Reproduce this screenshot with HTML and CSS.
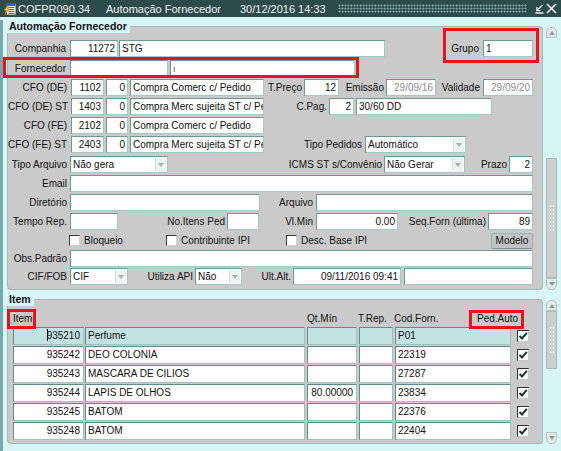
FILE: index.html
```html
<!DOCTYPE html>
<html lang="pt-BR">
<head>
    <meta charset="UTF-8">
    <title>Automação Fornecedor</title>
    <link rel="stylesheet" href="styles.css">
</head>
<body>
<div class="window">
    <div class="titlebar">
        <svg class="app-icon" width="14" height="14" viewBox="0 0 14 14">
            <rect x="3.5" y="1.5" width="9.5" height="11.5" fill="#f2f2f2" stroke="#4a4a4a" stroke-width="0.8"/>
            <rect x="4" y="2" width="8.5" height="2" fill="#2b5fd0"/>
            <path d="M5.5 5.5h6M5.5 7.5h6M5.5 9.5h6M5.5 11.5h6" stroke="#d33" stroke-width="1"/>
            <path d="M4.5 3.5 L1 8.5 H3 L1.5 13.5 L6 7 H4 L5.8 3.5Z" fill="#f5d321" stroke="#7a5c00" stroke-width="0.4"/>
        </svg>
        <span class="t-form">COFPR090.34</span>
        <span class="t-name">Automação Fornecedor</span>
        <span class="t-date">30/12/2016 14:33</span>
        <span class="grip"></span>
        <svg class="t-min" width="9" height="10" viewBox="0 0 9 10">
            <path d="M7.5 1 L2 6.5 M1.8 3 V6.7 H5.5 M0.5 9 H8.5" stroke="#e6eeee" stroke-width="1.3" fill="none"/>
        </svg>
        <svg class="t-close" width="11" height="11" viewBox="0 0 11 11">
            <path d="M1 1 L10 10 M10 1 L1 10" stroke="#f2f6f6" stroke-width="1.6"/>
        </svg>
    </div>

    <div class="body">
        <div class="block">
            <fieldset class="frame">
                <legend>Automação Fornecedor</legend>
                <div class="form">
                    <div class="row gap3">
                        <span class="lb w-58">Companhia</span>
                        <div class="fd w-48 ml-4 r">11272</div>
                        <div class="fd w-266 ml-1">STG</div>
                        <span class="lb w-30 ml-64">Grupo</span>
                        <div class="fd w-50 ml-4">1</div>
                    </div>
                    <div class="row">
                        <span class="lb w-58">Fornecedor</span>
                        <div class="fd w-98 ml-4"></div>
                        <div class="fd w-185 ml-2"><span class="tick">ı</span></div>
                    </div>
                    <div class="row">
                        <span class="lb w-59">CFO (DE)</span>
                        <div class="fd w-33 ml-4 r">1102</div>
                        <div class="fd w-22 ml-2 r">0</div>
                        <div class="fd w-134 ml-2">Compra Comerc c/ Pedido</div>
                        <span class="lb w-36 ml-2">T.Preço</span>
                        <div class="fd w-35 ml-2 r">12</div>
                        <span class="lb w-43 ml-2">Emissão</span>
                        <div class="fd w-50 ml-2 r dis">29/09/16</div>
                        <span class="lb w-42 ml-2">Validade</span>
                        <div class="fd w-50 ml-3 r dis">29/09/20</div>
                    </div>
                    <div class="row">
                        <span class="lb w-59">CFO (DE) ST</span>
                        <div class="fd w-33 ml-4 r">1403</div>
                        <div class="fd w-22 ml-2 r">0</div>
                        <div class="fd w-134 ml-2">Compra Merc sujeita ST c/ Pe</div>
                        <span class="lb w-61 ml-2">C.Pag.</span>
                        <div class="fd w-25 ml-2 r">2</div>
                        <div class="fd w-136 ml-2">30/60 DD</div>
                    </div>
                    <div class="row">
                        <span class="lb w-59">CFO (FE)</span>
                        <div class="fd w-33 ml-4 r">2102</div>
                        <div class="fd w-22 ml-2 r">0</div>
                        <div class="fd w-134 ml-2">Compra Comerc c/ Pedido</div>
                    </div>
                    <div class="row gap3">
                        <span class="lb w-59">CFO (FE) ST</span>
                        <div class="fd w-33 ml-4 r">2403</div>
                        <div class="fd w-22 ml-2 r">0</div>
                        <div class="fd w-134 ml-2">Compra Merc sujeita ST c/ Pe</div>
                        <span class="lb w-96 ml-2">Tipo Pedidos</span>
                        <div class="fd sel w-101 ml-3">Automático<span class="arr"></span></div>
                    </div>
                    <div class="row">
                        <span class="lb w-59">Tipo Arquivo</span>
                        <div class="fd sel w-98 ml-3">Não gera<span class="arr"></span></div>
                        <span class="lb w-212 ml-2">ICMS ST s/Convênio</span>
                        <div class="fd sel w-81 ml-2">Não Gerar<span class="arr"></span></div>
                        <span class="lb w-40 ml-2">Prazo</span>
                        <div class="fd w-24 ml-2 r">2</div>
                    </div>
                    <div class="row">
                        <span class="lb w-59">Email</span>
                        <div class="fd w-463 ml-3"></div>
                    </div>
                    <div class="row">
                        <span class="lb w-59">Diretório</span>
                        <div class="fd w-190 ml-3"></div>
                        <span class="lb w-51 ml-2">Arquivo</span>
                        <div class="fd w-217 ml-3"></div>
                    </div>
                    <div class="row">
                        <span class="lb w-59">Tempo Rep.</span>
                        <div class="fd w-48 ml-3"></div>
                        <span class="lb w-105 ml-2">No.Itens Ped</span>
                        <div class="fd w-32 ml-2"></div>
                        <span class="lb w-52 ml-2">Vl.Min</span>
                        <div class="fd w-82 ml-3 r">0.00</div>
                        <span class="lb w-86 ml-2">Seq.Forn (última)</span>
                        <div class="fd w-45 ml-2 r">89</div>
                    </div>
                    <div class="row gap1">
                        <label class="check w-97 ml-61"><span class="cb"></span>Bloqueio</label>
                        <label class="check w-120"><span class="cb"></span>Contribuinte IPI</label>
                        <label class="check w-205"><span class="cb"></span>Desc. Base IPI</label>
                        <button class="btn w-42">Modelo</button>
                    </div>
                    <div class="row gap1">
                        <span class="lb w-59">Obs.Padrão</span>
                        <div class="fd w-463 ml-3"></div>
                    </div>
                    <div class="row">
                        <span class="lb w-59">CIF/FOB</span>
                        <div class="fd sel w-58 ml-3">CIF<span class="arr"></span></div>
                        <span class="lb w-63 ml-2">Utiliza API</span>
                        <div class="fd sel w-47 ml-2">Não<span class="arr"></span></div>
                        <span class="lb w-47 ml-2">Ult.Alt.</span>
                        <div class="fd w-108 ml-2 r">09/11/2016 09:41</div>
                        <div class="fd w-129 ml-3"></div>
                    </div>
                </div>
            </fieldset>
            <div class="vscroll">
                <span class="sb-up"></span>
                <span class="sb-track"></span>
                <span class="sb-thumb thumb-top"><i></i></span>
                <span class="sb-down"></span>
            </div>
        </div>

        <div class="block items">
            <fieldset class="frame">
                <legend>Item</legend>
                <div class="grid">
                    <div class="ihead">
                        <span class="h-item">Item</span>
                        <span class="h-qt">Qt.Mín</span>
                        <span class="h-trep">T.Rep.</span>
                        <span class="h-cod">Cod.Forn.</span>
                        <span class="h-ped">Ped.Auto</span>
                    </div>
                    <div class="irow cur">
                        <div class="ifd w-71 ml-5 r"><span class="caret"></span>935210</div>
                        <div class="ifd w-220 ml-1">Perfume</div>
                        <div class="ifd w-50 ml-2 r"></div>
                        <div class="ifd w-34 ml-2"></div>
                        <div class="ifd w-116 ml-2">P01</div>
                        <span class="cbx"><svg width="10" height="10" viewBox="0 0 10 10"><path d="M1.5 5 L4 7.5 L8.8 1.8" stroke="#1b3535" stroke-width="2" fill="none"/></svg></span>
                    </div>
                    <div class="irow">
                        <div class="ifd w-71 ml-5 r">935242</div>
                        <div class="ifd w-220 ml-1">DEO COLONIA</div>
                        <div class="ifd w-50 ml-2 r"></div>
                        <div class="ifd w-34 ml-2"></div>
                        <div class="ifd w-116 ml-2">22319</div>
                        <span class="cbx"><svg width="10" height="10" viewBox="0 0 10 10"><path d="M1.5 5 L4 7.5 L8.8 1.8" stroke="#1b3535" stroke-width="2" fill="none"/></svg></span>
                    </div>
                    <div class="irow">
                        <div class="ifd w-71 ml-5 r">935243</div>
                        <div class="ifd w-220 ml-1">MASCARA DE CILIOS</div>
                        <div class="ifd w-50 ml-2 r"></div>
                        <div class="ifd w-34 ml-2"></div>
                        <div class="ifd w-116 ml-2">27287</div>
                        <span class="cbx"><svg width="10" height="10" viewBox="0 0 10 10"><path d="M1.5 5 L4 7.5 L8.8 1.8" stroke="#1b3535" stroke-width="2" fill="none"/></svg></span>
                    </div>
                    <div class="irow">
                        <div class="ifd w-71 ml-5 r">935244</div>
                        <div class="ifd w-220 ml-1">LAPIS DE OLHOS</div>
                        <div class="ifd w-50 ml-2 r">80.00000</div>
                        <div class="ifd w-34 ml-2"></div>
                        <div class="ifd w-116 ml-2">23834</div>
                        <span class="cbx"><svg width="10" height="10" viewBox="0 0 10 10"><path d="M1.5 5 L4 7.5 L8.8 1.8" stroke="#1b3535" stroke-width="2" fill="none"/></svg></span>
                    </div>
                    <div class="irow">
                        <div class="ifd w-71 ml-5 r">935245</div>
                        <div class="ifd w-220 ml-1">BATOM</div>
                        <div class="ifd w-50 ml-2 r"></div>
                        <div class="ifd w-34 ml-2"></div>
                        <div class="ifd w-116 ml-2">22376</div>
                        <span class="cbx"><svg width="10" height="10" viewBox="0 0 10 10"><path d="M1.5 5 L4 7.5 L8.8 1.8" stroke="#1b3535" stroke-width="2" fill="none"/></svg></span>
                    </div>
                    <div class="irow">
                        <div class="ifd w-71 ml-5 r">935248</div>
                        <div class="ifd w-220 ml-1">BATOM</div>
                        <div class="ifd w-50 ml-2 r"></div>
                        <div class="ifd w-34 ml-2"></div>
                        <div class="ifd w-116 ml-2">22404</div>
                        <span class="cbx"><svg width="10" height="10" viewBox="0 0 10 10"><path d="M1.5 5 L4 7.5 L8.8 1.8" stroke="#1b3535" stroke-width="2" fill="none"/></svg></span>
                    </div>
                </div>
            </fieldset>
            <div class="vscroll">
                <span class="sb-up"></span>
                <span class="sb-thumb thumb-items"><i></i></span>
                <span class="sb-track"></span>
                <span class="sb-down"></span>
            </div>
        </div>
    </div>

    <!-- marcacoes em vermelho -->
    <div class="mark mark-forn"></div>
    <div class="mark mark-grupo"></div>
    <div class="mark mark-item"></div>
    <div class="mark mark-ped"></div>
</div>
</body>
</html>
```

FILE: styles.css
```css
*{
    box-sizing: border-box;
}

body{
    margin: 0;
    background: #d9f6f6;
    font-family: "Liberation Sans", Arial, sans-serif;
    font-size: 10px;
    color: #111;
}

.window{
    position: relative;
    width: 561px;
    height: 451px;
    overflow: hidden;
}

/* barra de titulo */
.titlebar{
    display: flex;
    align-items: center;
    height: 17px;
    background: #2e4b4c;
    color: #eef4f4;
    font-size: 11px;
    white-space: nowrap;
}

.app-icon{
    flex: none;
    margin-left: 3px;
}

.t-form{
    width: 88px;
    margin-left: 1px;
}

.t-name{
    width: 134px;
}

.t-date{
    width: 98px;
}

.grip{
    width: 189px;
    height: 9px;
    background-image: radial-gradient(circle, #86acac 0.9px, transparent 1.1px);
    background-size: 3px 3px;
}

.t-min{
    flex: none;
    margin-left: 8px;
}

.t-close{
    flex: none;
    margin-left: 2px;
}

/* corpo */
.body{
    border-left: 3px solid #79a9ad;
    padding-left: 4px;
    height: 434px;
}

.block{
    display: flex;
    margin-top: 3px;
}

.frame{
    margin: 0;
    padding: 0 0 2px;
    width: 536px;
    min-width: 0;
    border: 1px solid #a7b6b6;
    border-radius: 4px;
    background: #cacaca;
}

.frame legend{
    margin-left: -1px;
    padding: 0 3px 0 2px;
    background: #d9f6f6;
    font-size: 10.5px;
    font-weight: bold;
    line-height: 13px;
}

.form{
    padding-top: 7px;
}

.row{
    display: flex;
    align-items: center;
    height: 17px;
    margin-bottom: 2px;
}

.row.gap3{
    margin-bottom: 3px;
}

.row.gap1{
    margin-bottom: 1px;
}

.lb{
    flex: none;
    text-align: right;
    white-space: nowrap;
}

.fd{
    flex: none;
    height: 17px;
    padding: 0 2px;
    background: #fff;
    border: 1px solid #a9c6c6;
    border-top-color: #6e9898;
    border-left-color: #6e9898;
    line-height: 15px;
    white-space: nowrap;
    overflow: hidden;
}

.r{
    text-align: right;
}

.dis{
    color: #8e8e8e;
}

.tick{
    color: #555;
    font-size: 9px;
}

.sel{
    display: flex;
    align-items: center;
    padding-right: 1px;
}

.arr{
    margin-left: auto;
    width: 11px;
    height: 13px;
    background: #eef2f2;
    border-left: 1px solid #d6dede;
    display: flex;
    align-items: center;
    justify-content: center;
}

.arr::after{
    content: "";
    border-left: 3.5px solid transparent;
    border-right: 3.5px solid transparent;
    border-top: 4px solid #a3aeae;
}

.check{
    flex: none;
    display: flex;
    align-items: center;
    white-space: nowrap;
}

.cb{
    width: 11px;
    height: 11px;
    margin-right: 4px;
    background: #fff;
    border: 1px solid #cfcfcf;
    border-top-color: #3c3c3c;
    border-left-color: #3c3c3c;
}

.btn{
    flex: none;
    height: 16px;
    padding: 0;
    font: inherit;
    color: #111;
    background: #c2c4c4;
    border: 1px solid #9fb2b2;
    border-bottom-color: #7f9090;
    border-radius: 2px;
}

/* scroll vertical */
.vscroll{
    flex: none;
    width: 11px;
    margin: 7px 0 0 3px;
    display: flex;
    flex-direction: column;
}

.sb-up,
.sb-down{
    display: flex;
    align-items: center;
    justify-content: center;
    height: 11px;
    background: #e3eaea;
    border: 1px solid #b3c4c4;
}

.sb-up{
    border-radius: 5px 5px 0 0;
}

.sb-down{
    height: 12px;
    border-radius: 0 0 5px 5px;
}

.sb-up::after{
    content: "";
    border-left: 3.5px solid transparent;
    border-right: 3.5px solid transparent;
    border-bottom: 4px solid #8c9c9c;
}

.sb-down::after{
    content: "";
    border-left: 3.5px solid transparent;
    border-right: 3.5px solid transparent;
    border-top: 4px solid #8c9c9c;
}

.sb-track{
    flex: 1;
}

.sb-thumb{
    display: flex;
    align-items: center;
    justify-content: center;
    background: #cdd0d0;
    border: 1px solid #a9bcbc;
}

.sb-thumb i{
    width: 6px;
    height: 28px;
    background-image: radial-gradient(circle, #f4f8f8 0.8px, transparent 1px);
    background-size: 3px 4px;
}

.thumb-top{
    height: 120px;
}

.thumb-items{
    height: 58px;
}

/* bloco de itens */
.grid{
    padding-top: 4px;
}

.ihead{
    display: flex;
    align-items: center;
    height: 17px;
    white-space: nowrap;
}

.h-item{
    width: 24px;
    margin-left: 2px;
    padding-left: 3px;
    line-height: 12px;
    background: #c6c6c6;
}

.h-qt{
    width: 51px;
    margin-left: 273px;
}

.h-trep{
    width: 36px;
}

.h-cod{
    width: 83px;
}

.h-ped{
    width: 44px;
}

.irow{
    display: flex;
    align-items: center;
    height: 18px;
    margin-bottom: 1px;
}

.ifd{
    flex: none;
    height: 18px;
    padding: 0 3px 0 2px;
    background: #fff;
    border: 1px solid #a3c0c0;
    border-top-color: #5d8d8d;
    border-left-color: #5d8d8d;
    line-height: 16px;
    white-space: nowrap;
    overflow: hidden;
}

.irow.cur .ifd{
    background: #c3e2e2;
}

.caret{
    display: inline-block;
    width: 1px;
    height: 12px;
    margin-right: -1px;
    background: #000;
    vertical-align: -2px;
}

.cbx{
    flex: none;
    display: flex;
    align-items: center;
    justify-content: center;
    width: 12px;
    height: 12px;
    margin-left: 6px;
    background: #fff;
    border: 1px solid #c8c8c8;
    border-top-color: #333;
    border-left-color: #333;
}

/* marcacoes */
.mark{
    position: absolute;
    border: 3px solid #e3141b;
}

.mark-forn{
    left: 3px;
    top: 57px;
    width: 356px;
    height: 21px;
}

.mark-grupo{
    left: 443px;
    top: 28px;
    width: 96px;
    height: 35px;
}

.mark-item{
    left: 7px;
    top: 309px;
    width: 29px;
    height: 20px;
}

.mark-ped{
    left: 469px;
    top: 310px;
    width: 55px;
    height: 19px;
}

/* larguras e margens */
.w-22{ width: 22px; }
.w-24{ width: 24px; }
.w-25{ width: 25px; }
.w-30{ width: 30px; }
.w-32{ width: 32px; }
.w-33{ width: 33px; }
.w-34{ width: 34px; }
.w-35{ width: 35px; }
.w-36{ width: 36px; }
.w-40{ width: 40px; }
.w-42{ width: 42px; }
.w-43{ width: 43px; }
.w-45{ width: 45px; }
.w-47{ width: 47px; }
.w-48{ width: 48px; }
.w-50{ width: 50px; }
.w-51{ width: 51px; }
.w-52{ width: 52px; }
.w-58{ width: 58px; }
.w-59{ width: 59px; }
.w-61{ width: 61px; }
.w-63{ width: 63px; }
.w-71{ width: 71px; }
.w-81{ width: 81px; }
.w-82{ width: 82px; }
.w-86{ width: 86px; }
.w-96{ width: 96px; }
.w-97{ width: 97px; }
.w-98{ width: 98px; }
.w-101{ width: 101px; }
.w-105{ width: 105px; }
.w-108{ width: 108px; }
.w-116{ width: 116px; }
.w-120{ width: 120px; }
.w-129{ width: 129px; }
.w-134{ width: 134px; }
.w-136{ width: 136px; }
.w-185{ width: 185px; }
.w-190{ width: 190px; }
.w-205{ width: 205px; }
.w-212{ width: 212px; }
.w-217{ width: 217px; }
.w-220{ width: 220px; }
.w-266{ width: 266px; }
.w-463{ width: 463px; }

.ml-1{ margin-left: 1px; }
.ml-2{ margin-left: 2px; }
.ml-3{ margin-left: 3px; }
.ml-4{ margin-left: 4px; }
.ml-5{ margin-left: 5px; }
.ml-61{ margin-left: 61px; }
.ml-64{ margin-left: 64px; }
```
